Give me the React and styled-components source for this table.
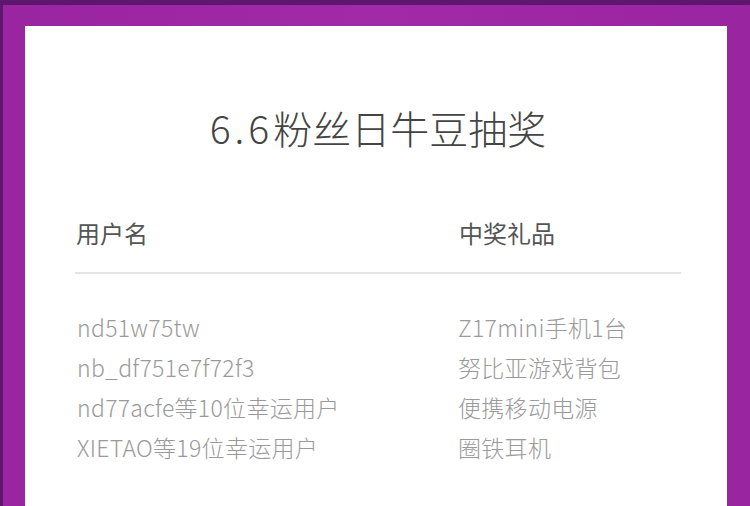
import React from 'react'
import styled, { createGlobalStyle } from 'styled-components'

const winners = [
    { user: 'nd51w75tw', prize: 'Z17mini手机1台' },
    { user: 'nb_df751e7f72f3', prize: '努比亚游戏背包' },
    { user: 'nd77acfe等10位幸运用户', prize: '便携移动电源' },
    { user: 'XIETAO等19位幸运用户', prize: '圈铁耳机' },
]

const GlobalStyle = createGlobalStyle`
    html, body {
        margin: 0;
        padding: 0;
        height: 100%;
        overflow: hidden;
        background: #9c27a2;
    }
    body {
        font-family: "Noto Sans CJK SC", "Noto Sans", sans-serif;
    }
`

const App = () => {
    return (
        <>
            <GlobalStyle />
            <Frame>
                <Panel>
                    <Title><Num>6.6</Num>粉丝日牛豆抽奖</Title>
                    <HeadRow>
                        <HeadCell>用户名</HeadCell>
                        <HeadCell>中奖礼品</HeadCell>
                    </HeadRow>
                    <List>
                        {winners.map((w) => (
                            <Row key={w.user}>
                                <Cell>{w.user}</Cell>
                                <Cell>{w.prize}</Cell>
                            </Row>
                        ))}
                    </List>
                </Panel>
            </Frame>
        </>
    )
}

export default App

const Frame = styled.div`
    box-sizing: border-box;
    height: 506px;
    background: linear-gradient(90deg, #9a25a0 0%, #a12aa6 50%, #9a25a0 100%);
    border-top: 5px solid #5e176f;
    border-left: 3px solid #5e176f;
    padding: 21px 23px 0 22px;
`

const Panel = styled.section`
    box-sizing: border-box;
    height: 100%;
    background: #fff;
    padding: 77px 46px 0 50px;
`

const Title = styled.h1`
    margin: 0;
    text-align: center;
    font-size: 39px;
    line-height: 48px;
    font-weight: 300;
    color: #444;
`

const Num = styled.span`
    letter-spacing: 4px;
`

const HeadRow = styled.div`
    display: grid;
    grid-template-columns: 383px 1fr;
    margin-top: 67px;
    padding: 0 0 24px 1px;
    border-bottom: 2px solid #e4e4e4;
`

const HeadCell = styled.div`
    font-size: 24px;
    line-height: 30px;
    color: #555;
    font-weight: 400;
`

const List = styled.div`
    display: flex;
    flex-direction: column;
    padding: 33px 0 0 2px;
`

const Row = styled.div`
    display: grid;
    grid-template-columns: 381px 1fr;
    height: 40px;
    align-items: center;
`

const Cell = styled.div`
    font-size: 23px;
    line-height: 40px;
    color: #9a9a9a;
    font-weight: 300;
    white-space: nowrap;
    letter-spacing: 0.3px;
`
